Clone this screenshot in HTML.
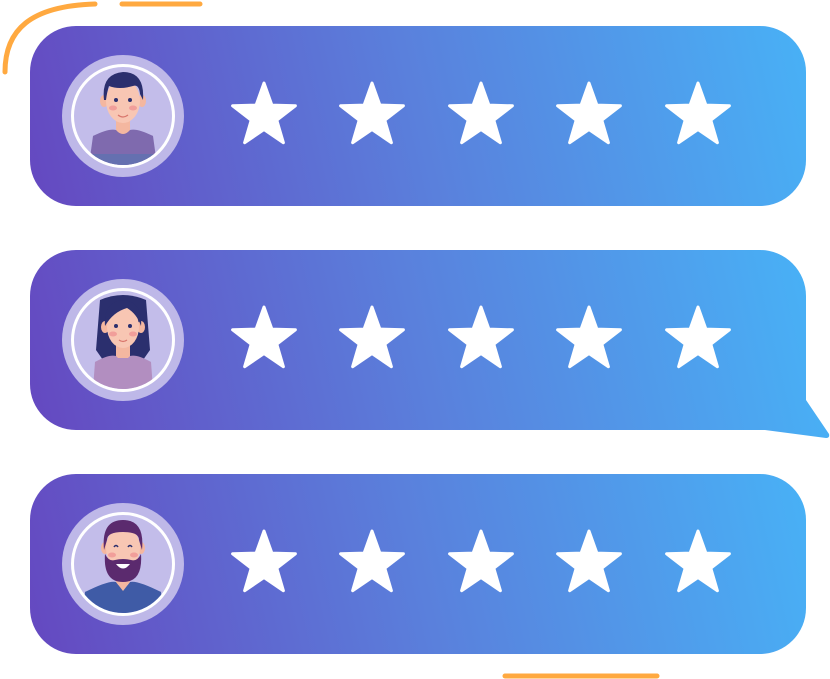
<!DOCTYPE html>
<html><head><meta charset="utf-8"><style>html,body{margin:0;padding:0;background:#fff}svg{display:block}</style></head>
<body>
<svg width="830" height="679" viewBox="0 0 830 679" xmlns="http://www.w3.org/2000/svg">
<defs>
<linearGradient id="g" x1="30" y1="180" x2="806" y2="0" gradientUnits="userSpaceOnUse">
<stop offset="0" stop-color="#6548c0"/><stop offset="0.5" stop-color="#5a80dc"/><stop offset="1" stop-color="#48b1f6"/>
</linearGradient>
<g id="star"><polygon points="0,-33 7.9,-10.9 31.4,-10.2 12.8,4.2 19.4,26.7 0,13.5 -19.4,26.7 -12.8,4.2 -31.4,-10.2 -7.9,-10.9" fill="#fff" stroke="#fff" stroke-width="3" stroke-linejoin="round"/></g>
<g id="stars"><use href="#star" x="264"/><use href="#star" x="372"/><use href="#star" x="481"/><use href="#star" x="589"/><use href="#star" x="698"/></g>
<g id="ring"><circle r="61" fill="#beb8e8"/><circle r="52" fill="#fff"/><circle r="49" fill="#c3bdea"/></g>
<clipPath id="c"><circle r="49"/></clipPath>
</defs>
<path d="M5,72 C5,30 30,6 95,4" fill="none" stroke="#ffa940" stroke-width="5" stroke-linecap="round"/>
<line x1="122" y1="4" x2="200" y2="4" stroke="#ffa940" stroke-width="5" stroke-linecap="round"/>
<line x1="505" y1="676" x2="657" y2="676" stroke="#ffa940" stroke-width="5" stroke-linecap="round"/>

<g transform="translate(0,26)"><rect x="30" y="0" width="776" height="180" rx="46" fill="url(#g)"/></g>
<g transform="translate(0,250)"><path d="M76,0 H760 A46,46 0 0 1 806,46 V150 L829,184 Q830,188 826,188 L765,180 H76 A46,46 0 0 1 30,134 V46 A46,46 0 0 1 76,0Z" fill="url(#g)"/></g>
<g transform="translate(0,474)"><rect x="30" y="0" width="776" height="180" rx="46" fill="url(#g)"/></g>

<g transform="translate(0,116)"><use href="#stars"/></g>
<g transform="translate(0,340)"><use href="#stars"/></g>
<g transform="translate(0,564)"><use href="#stars"/></g>

<!-- avatar 1 -->
<g transform="translate(123,116)">
<use href="#ring"/>
<g clip-path="url(#c)">
<path d="M-34,49 L-30,20 Q0,8 30,20 L34,49Z" fill="#7f6aae"/>
<rect x="-34" y="38" width="68" height="12" fill="#6570b0"/>
<rect x="-7" y="4" width="14" height="14" fill="#f4b7a0"/>
<path d="M-30,20 Q-14,12 -7,14 Q0,22 7,14 Q14,12 30,20 L26,24 Q0,16 -26,24Z" fill="#7f6aae"/>
</g>
<ellipse cx="-19" cy="-15" rx="4" ry="6" fill="#f4b7a0"/><ellipse cx="19" cy="-15" rx="4" ry="6" fill="#f4b7a0"/>
<ellipse cx="0" cy="-15" rx="17" ry="22" fill="#f8c6b3"/>
<path d="M-19,-16 Q-22,-42 0,-44 Q22,-44 20,-16 L17,-22 Q16,-32 10,-30 Q-4,-26 -14,-30 Q-16,-24 -17,-16Z" fill="#2b2f6e"/>
<circle cx="-7" cy="-16" r="2" fill="#2b2f6e"/><circle cx="7" cy="-16" r="2" fill="#2b2f6e"/>
<ellipse cx="-10" cy="-8" rx="4" ry="2.5" fill="#f19e9a"/><ellipse cx="10" cy="-8" rx="4" ry="2.5" fill="#f19e9a"/>
<path d="M-5,-1 Q0,3 5,-1" fill="none" stroke="#d9776d" stroke-width="1.2"/>
</g>

<!-- avatar 2 -->
<g transform="translate(123,340)">
<use href="#ring"/>
<g clip-path="url(#c)">
<path d="M-23,-40 Q0,-50 23,-40 L27,10 L20,20 L-20,20 L-27,10Z" fill="#2b2f6e"/>
<path d="M-30,49 L-28,22 Q0,10 28,22 L30,49Z" fill="#b28ec0"/>
<rect x="-7" y="4" width="14" height="14" fill="#f4b7a0"/>
<path d="M-28,22 Q-14,14 -7,16 Q0,24 7,16 Q14,14 28,22Z" fill="#b28ec0"/>
</g>
<ellipse cx="-18" cy="-13" rx="4" ry="6" fill="#f4b7a0"/><ellipse cx="18" cy="-13" rx="4" ry="6" fill="#f4b7a0"/>
<ellipse cx="0" cy="-13" rx="16" ry="21" fill="#f8c6b3"/>
<path d="M-18,-14 Q-20,-38 0,-40 Q20,-38 18,-14 Q14,-26 4,-32 Q-10,-28 -18,-14Z" fill="#2b2f6e"/>
<circle cx="-7" cy="-14" r="2" fill="#2b2f6e"/><circle cx="7" cy="-14" r="2" fill="#2b2f6e"/>
<ellipse cx="-10" cy="-6" rx="4" ry="2.5" fill="#f19e9a"/><ellipse cx="10" cy="-6" rx="4" ry="2.5" fill="#f19e9a"/>
<path d="M-4,0 Q0,3 4,0" fill="none" stroke="#d9776d" stroke-width="1.2"/>
</g>

<!-- avatar 3 -->
<g transform="translate(123,564)">
<use href="#ring"/>
<g clip-path="url(#c)">
<path d="M-40,49 L-38,28 Q0,14 38,28 L40,49Z" fill="#3f5ba6"/>
<rect x="-7" y="6" width="14" height="14" fill="#f4b7a0"/>
<path d="M-38,28 Q-14,16 -7,18 L0,27 L7,18 Q14,16 38,28 L38,30 L-38,30Z" fill="#3f5ba6"/>
<path d="M-7,18 L0,27 L7,18Z" fill="#f4b7a0"/>
</g>
<ellipse cx="-18" cy="-16" rx="4" ry="6" fill="#f4b7a0"/><ellipse cx="18" cy="-16" rx="4" ry="6" fill="#f4b7a0"/>
<ellipse cx="0" cy="-16" rx="17" ry="22" fill="#f8c6b3"/>
<path d="M-19,-14 Q-22,-44 0,-44 Q22,-44 19,-14 L16,-24 Q16,-32 0,-32 Q-16,-32 -16,-24Z" fill="#5b2a6e"/>
<path d="M-18,-10 Q-20,18 0,18 Q20,18 18,-10 Q14,-2 8,-4 Q0,-6 -8,-4 Q-14,-2 -18,-10Z" fill="#5b2a6e"/>
<path d="M-7,0 Q0,9 7,0Z" fill="#fff"/>
<path d="M-9,-17 Q-7,-20 -5,-17 M5,-17 Q7,-20 9,-17" fill="none" stroke="#2b2f6e" stroke-width="1.5"/>
<ellipse cx="-11" cy="-9" rx="4" ry="2.5" fill="#f19e9a"/><ellipse cx="11" cy="-9" rx="4" ry="2.5" fill="#f19e9a"/>
</g>
</svg>
</body></html>
